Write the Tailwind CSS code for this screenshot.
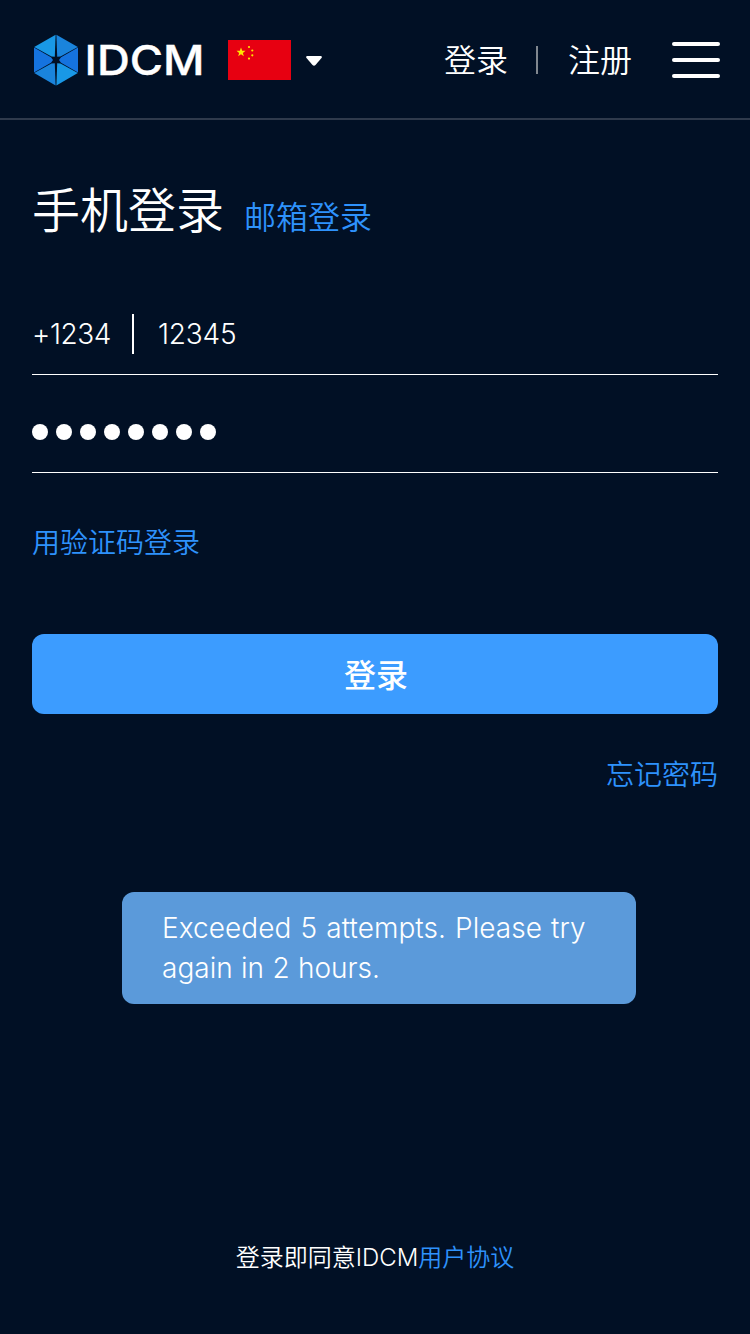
<!DOCTYPE html>
<html lang="zh-CN">
<head>
<meta charset="utf-8">
<title>IDCM</title>
<script src="https://cdn.jsdelivr.net/npm/@tailwindcss/browser@4"></script>
</head>
<body class="bg-[#011025] text-white font-['Inter','Noto_Sans_CJK_SC',sans-serif] font-[350]">
<div class="flex h-[1334px] w-[750px] flex-col overflow-hidden">
  <header class="flex h-[120px] shrink-0 items-center border-b-2 border-[#2f3a4c] pl-8 pr-[30px] pt-[2px]">
    <svg class="h-[56px] w-[176px]" viewBox="32 32 176 56" role="img" aria-label="IDCM">
      <path fill="#1998e6" d="M55.600 34.700L34.200 47L51.500 56.600L54.800 56.800Z"/>
      <path fill="#1a84dc" d="M56.400 34.700L77.800 47L60.500 56.600L57.200 56.800Z"/>
      <path fill="#1573df" d="M34 47.500L51 57.200L53 60L51 62.800L34 72.600Z"/>
      <path fill="#1573df" d="M78 47.500L61 57.200L59 60L61 62.800L78 72.600Z"/>
      <path fill="#1a84dc" d="M34.200 73.100L51.500 63.400L54.800 63.200L55.600 85.500Z"/>
      <path fill="#1998e6" d="M77.800 73.100L60.500 63.400L57.200 63.200L56.400 85.500Z"/>
      <text x="84.500" y="75" textLength="120" lengthAdjust="spacingAndGlyphs" fill="#fff" stroke="#fff" stroke-width=".4" font-family="Inter" font-weight="500" font-size="41">IDCM</text>
    </svg>
    <svg class="ml-5 h-10 w-[63px]" viewBox="0 0 63 40">
      <rect width="63" height="40" fill="#e70011"/>
      <g fill="#ffe600">
        <path d="M13 7.500L14.200 10.700L17.500 10.800L14.900 12.900L15.800 16.200L13 14.300L10.200 16.200L11.100 12.900L8.500 10.800L11.800 10.700Z"/>
        <circle cx="21" cy="7" r="1.100"/><circle cx="24.300" cy="10.500" r="1.100"/><circle cx="24.300" cy="15.300" r="1.100"/><circle cx="21" cy="18.600" r="1.100"/>
      </g>
    </svg>
    <svg class="ml-[15px] mt-[2px] h-[10px] w-4" viewBox="0 0 16 10"><path fill="#fff" d="M1 0H15Q16.500 .5 15.500 2L9.500 9Q8 10.500 6.500 9L.5 2Q-.5 .5 1 0Z"/></svg>
    <nav class="ml-auto flex items-center text-[32px] leading-[44px]">
      <a class="pt-[2px]">登录</a>
      <span class="ml-7 mr-[30px] h-7 w-[2px] bg-[#80878f]"></span>
      <a class="pt-[2px]">注册</a>
    </nav>
    <button class="ml-10 flex w-12 flex-col gap-3"><i class="h-1 w-full rounded-full bg-white"></i><i class="h-1 w-full rounded-full bg-white"></i><i class="h-1 w-full rounded-full bg-white"></i></button>
  </header>

  <main class="flex flex-1 flex-col px-8 pt-[58px]">
    <div class="flex items-baseline gap-5">
      <h1 class="text-[48px] leading-[66px] font-[350]">手机登录</h1>
      <a class="pt-px text-[32px] leading-[44px] text-[#2e92fc]"><span class="inline-block translate-y-px">邮箱登录</span></a>
    </div>
    <div class="mt-[50px] flex h-[81px] items-center border-b border-white text-[28px] font-light">
      <span class="w-[100px] tracking-[-0.4px]">+1234</span>
      <span class="h-10 w-[2px] bg-white"></span>
      <span class="ml-6 tracking-[-0.2px]">12345</span>
    </div>
    <div class="flex h-[98px] items-center gap-2 border-b border-white pb-4 pt-[32px]">
      <i class="size-4 rounded-full bg-white"></i><i class="size-4 rounded-full bg-white"></i><i class="size-4 rounded-full bg-white"></i><i class="size-4 rounded-full bg-white"></i><i class="size-4 rounded-full bg-white"></i><i class="size-4 rounded-full bg-white"></i><i class="size-4 rounded-full bg-white"></i><i class="size-4 rounded-full bg-white"></i>
    </div>
    <a class="mt-[50px] text-[28px] leading-10 text-[#2e92fc]">用验证码登录</a>
    <button class="mt-[71px] h-20 shrink-0 rounded-xl bg-[#3c9cff] pl-[2px] pt-[3px] text-[32px] font-medium">登录</button>
    <a class="mt-[41px] self-end text-[28px] leading-10 text-[#2e92fc]">忘记密码</a>
    <div class="ml-[90px] mt-[97px] h-28 w-[514px] rounded-xl bg-[#5b9ada] py-4 pl-10 text-[28px] font-light leading-10"><span class="tracking-[0.05px] [word-spacing:1.2px]">Exceeded 5 attempts. Please try</span><br><span class="[word-spacing:0.5px]">again in 2 hours.</span></div>
    <footer class="mt-auto mb-[59px] flex justify-center text-[24px] leading-[34px]"><span>登录即同意</span><span class="font-light">IDCM</span><a class="text-[#2e92fc]">用户协议</a></footer>
  </main>
</div>
</body>
</html>
